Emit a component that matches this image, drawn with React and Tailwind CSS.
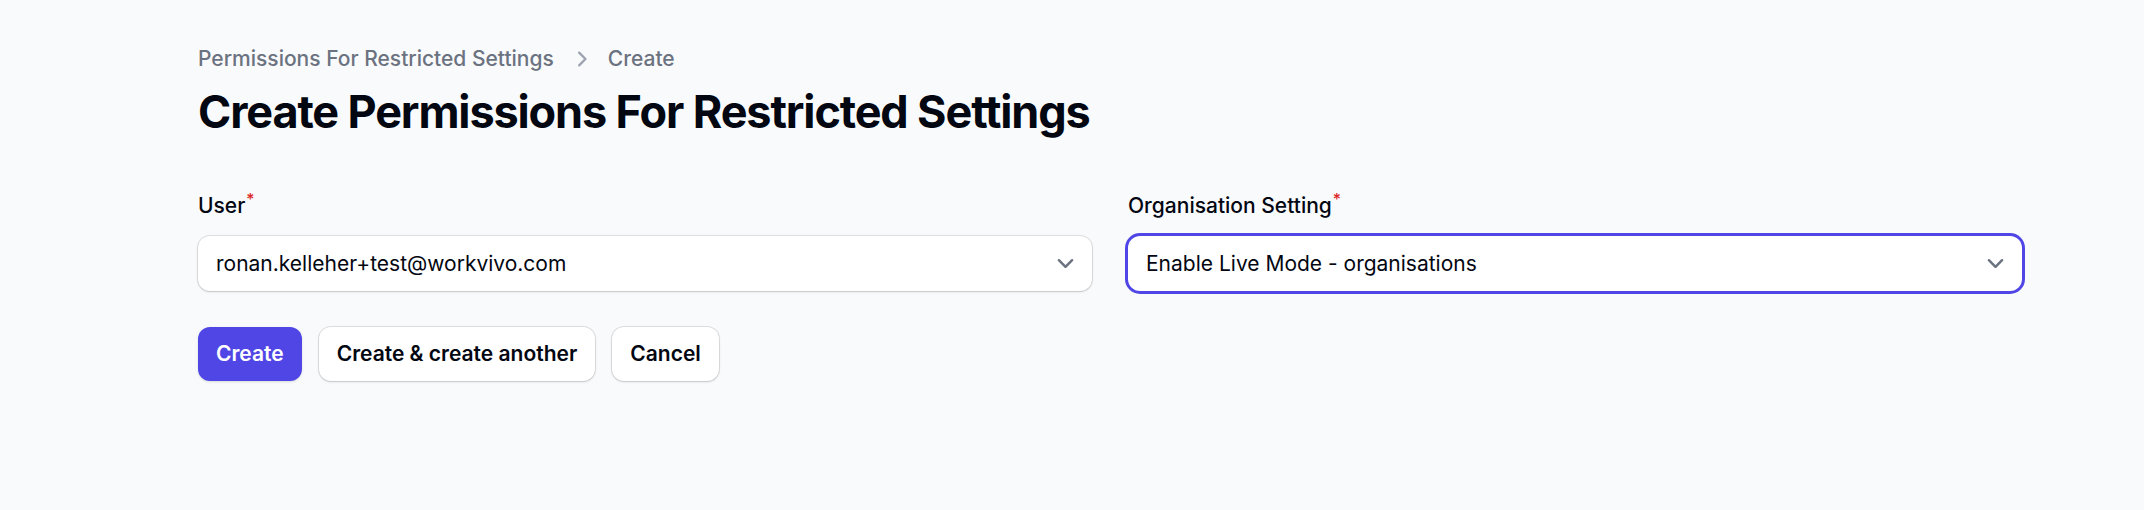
import { useState } from 'react';

const ChevronRight = () => (
  <svg viewBox="0 0 20 20" fill="currentColor" className="h-[30px] w-[30px] text-[#9ca3af]">
    <path
      fillRule="evenodd"
      d="M8.22 5.22a.75.75 0 0 1 1.06 0l4.25 4.25a.75.75 0 0 1 0 1.06l-4.25 4.25a.75.75 0 0 1-1.06-1.06L11.94 10 8.22 6.28a.75.75 0 0 1 0-1.06Z"
      clipRule="evenodd"
    />
  </svg>
);

const ChevronDown = () => (
  <svg viewBox="0 0 20 20" fill="none" className="h-[33px] w-[33px] shrink-0 text-[#6b7280]">
    <path d="M6 8l4 4 4-4" stroke="currentColor" strokeWidth="1.5" strokeLinecap="round" strokeLinejoin="round" />
  </svg>
);

const Field = ({ label, value, focused }) => (
  <div className="flex flex-col gap-[12px]">
    <label className="text-[21px] font-medium leading-[36px] text-[#030712]">
      {label}
      <sup className="ml-[1px] font-medium text-[#dc2626]">*</sup>
    </label>
    <div
      className={
        focused
          ? 'flex h-[55px] items-center justify-between rounded-[12px] bg-white pl-[18px] pr-[10px] shadow-sm ring-[3px] ring-[#4f46e5]'
          : 'flex h-[55px] items-center justify-between rounded-[12px] bg-white pl-[18px] pr-[10px] shadow-sm ring-1 ring-[#030712]/10'
      }
    >
      <span className="text-[21px] leading-[36px] text-[#030712]">{value}</span>
      <ChevronDown />
    </div>
  </div>
);

export default function App() {
  const [user] = useState('ronan.kelleher+test@workvivo.com');
  const [setting] = useState('Enable Live Mode - organisations');

  return (
    <div className="min-h-[510px] bg-[#f9fafb] pl-[198px] pr-[122px] pt-[44px] font-['Inter',sans-serif]">
      <nav className="flex items-center gap-[12px] text-[21px] font-medium leading-[30px] text-[#6b7280]">
        <span>Permissions For Restricted Settings</span>
        <ChevronRight />
        <span>Create</span>
      </nav>
      <h1 className="mt-[11px] text-[45px] font-bold leading-[54px] tracking-tight text-[#030712]">
        Create Permissions For Restricted Settings
      </h1>

      <div className="mt-[49px] grid grid-cols-2 gap-[36px]">
        <Field label="User" value={user} />
        <Field label="Organisation Setting" value={setting} focused />
      </div>

      <div className="mt-[36px] flex gap-[17px]">
        <button className="h-[54px] rounded-[12px] bg-[#4f46e5] px-[18px] text-[21px] font-semibold text-white shadow-sm">
          Create
        </button>
        <button className="h-[54px] rounded-[12px] bg-white px-[18px] text-[21px] font-semibold text-[#030712] shadow-sm ring-1 ring-[#030712]/10">
          Create &amp; create another
        </button>
        <button className="h-[54px] rounded-[12px] bg-white px-[18px] text-[21px] font-semibold text-[#030712] shadow-sm ring-1 ring-[#030712]/10">
          Cancel
        </button>
      </div>
    </div>
  );
}
